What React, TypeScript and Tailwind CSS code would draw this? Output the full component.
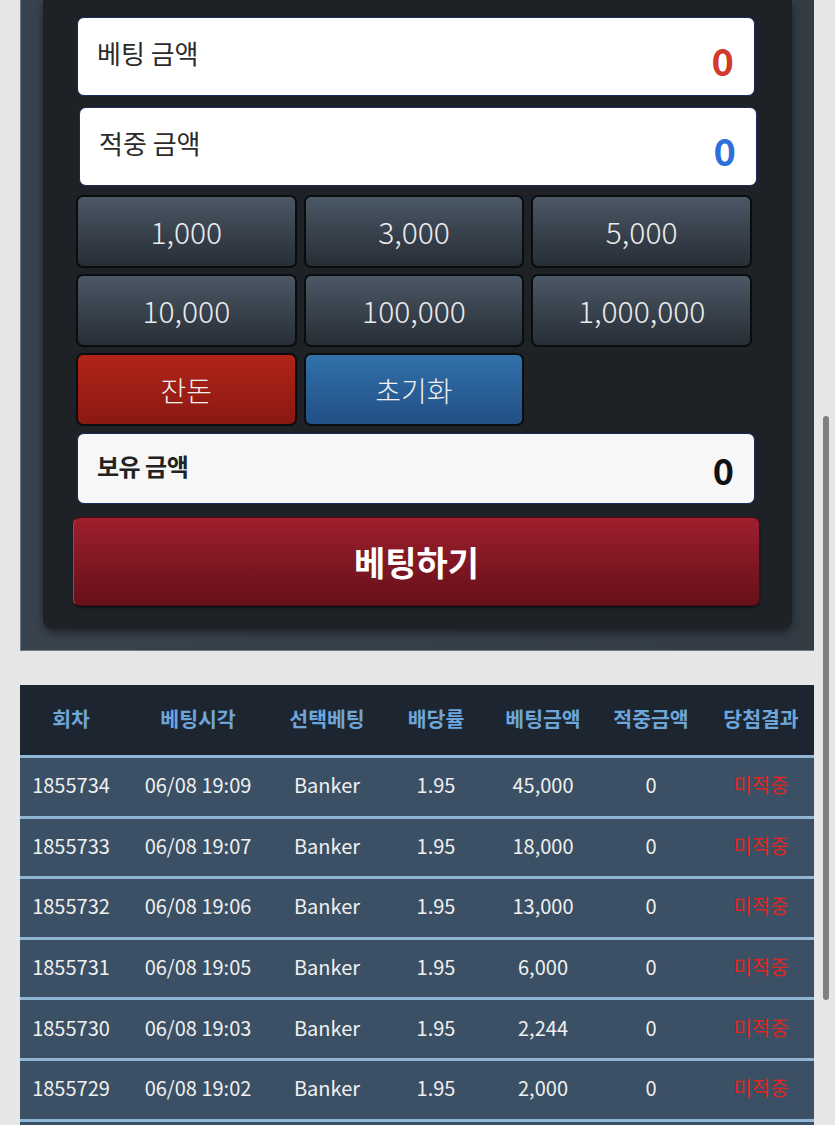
import React from 'react';

const font = { fontFamily: '"Noto Sans CJK KR", "Noto Sans", sans-serif' };

const chips = ['1,000', '3,000', '5,000', '10,000', '100,000', '1,000,000'];

const rows = [
  ['1855734', '06/08 19:09', '45,000'],
  ['1855733', '06/08 19:07', '18,000'],
  ['1855732', '06/08 19:06', '13,000'],
  ['1855731', '06/08 19:05', '6,000'],
  ['1855730', '06/08 19:03', '2,244'],
  ['1855729', '06/08 19:02', '2,000'],
];

const headers = ['회차', '베팅시각', '선택베팅', '배당률', '베팅금액', '적중금액', '당첨결과'];

const cols = 'grid grid-cols-[102px_152px_106px_112px_102px_114px_106px]';

const App: React.FC = () => {
  return (
    <div className="relative min-h-screen bg-[#e6e6e6] overflow-hidden" style={font}>
      {/* Bet panel */}
      <div className="ml-[20px] mr-[21px] bg-gradient-to-r from-[#39434d] to-[#333c45] border-l border-b border-[#6f7d8a] pr-[22px] pl-[22px] pb-[21px]">
        <div className="bg-[#1e2227] rounded-b-[10px] shadow-[0_4px_8px_rgba(0,0,0,0.45)] pt-[17px] pb-[23px]">
          <div className="ml-[34px] mr-[37px] h-[79px] bg-white rounded-[7px] border border-[#1c2a5e] flex items-center justify-between pl-[19px] pr-[20px]">
            <span className="text-[26px] text-[#2b2b2b] -mt-[8px]">베팅 금액</span>
            <span className="text-[38px] font-bold text-[#d23a2e] mt-[6px] leading-none">0</span>
          </div>
          <div className="mt-[11px] ml-[36px] mr-[35px] h-[79px] bg-white rounded-[7px] border border-[#1c2a5e] flex items-center justify-between pl-[19px] pr-[20px]">
            <span className="text-[26px] text-[#2b2b2b] -mt-[8px]">적중 금액</span>
            <span className="text-[38px] font-bold text-[#2f6fdc] mt-[6px] leading-none">0</span>
          </div>

          <div className="mt-[9px] ml-[33px] mr-[40px] grid grid-cols-3 gap-x-[7px] gap-y-[6px]">
            {chips.map((c) => (
              <button
                key={c}
                className="h-[73px] rounded-[7px] border-2 border-[#0b0c0e] bg-gradient-to-b from-[#4b5866] to-[#272e36] text-[#ececec] text-[30px] font-light"
              >
                {c}
              </button>
            ))}
            <button className="h-[73px] rounded-[7px] border-2 border-[#0b0c0e] bg-gradient-to-b from-[#b2241a] to-[#8a1911] text-[#f0f0f0] text-[28px] font-light">
              잔돈
            </button>
            <button className="h-[73px] rounded-[7px] border-2 border-[#0b0c0e] bg-gradient-to-b from-[#3171aa] to-[#224f86] text-[#f0f0f0] text-[28px] font-light">
              초기화
            </button>
          </div>

          <div className="mt-[7px] ml-[34px] mr-[37px] h-[71px] bg-[#f7f7f7] rounded-[7px] border border-[#1c2a5e] flex items-center justify-between pl-[19px] pr-[20px]">
            <span className="text-[24px] font-bold text-[#222] -mt-[6px] tracking-[-0.5px]">보유 금액</span>
            <span className="text-[36px] font-bold text-[#111] leading-none">0</span>
          </div>

          <button className="mt-[13px] ml-[30px] mr-[32px] w-[calc(100%-62px)] h-[89px] rounded-[7px] border border-[#4a0a10] border-l-[#c0392b] bg-gradient-to-b from-[#9e1f2d] to-[#65101a] shadow-[0_2px_2px_rgba(0,0,0,0.5)] text-white text-[34px] font-bold">
            베팅하기
          </button>
        </div>
      </div>

      {/* History table */}
      <div className="mt-[34px] ml-[20px] mr-[21px]">
        <div className={`${cols} h-[70px] bg-[#1c2530] items-center`}>
          {headers.map((h) => (
            <div key={h} className="text-center text-[20.5px] font-bold text-[#6ea6da] -mt-[4px]">
              {h}
            </div>
          ))}
        </div>
        {rows.map((r) => (
          <div
            key={r[0]}
            className={`${cols} h-[60.6px] border-t-[3px] border-[#8fb6d6] bg-[#3b5064] items-center text-[20px] font-normal text-[#f0f0f0]`}
          >
            <div className="text-center -mt-[3px]">{r[0]}</div>
            <div className="text-center -mt-[3px]">{r[1]}</div>
            <div className="text-center -mt-[3px]">Banker</div>
            <div className="text-center -mt-[3px]">1.95</div>
            <div className="text-center -mt-[3px]">{r[2]}</div>
            <div className="text-center -mt-[3px]">0</div>
            <div className="text-center -mt-[3px] text-[#e0251f]">미적중</div>
          </div>
        ))}
        <div className="h-[40px] border-t-[3px] border-[#8fb6d6] bg-[#3b5064]" />
      </div>

      {/* overlay scrollbar */}
      <div className="absolute left-[823px] top-[416px] w-[6px] h-[584px] rounded-full bg-[#808080]" />
    </div>
  );
};

export default App;
